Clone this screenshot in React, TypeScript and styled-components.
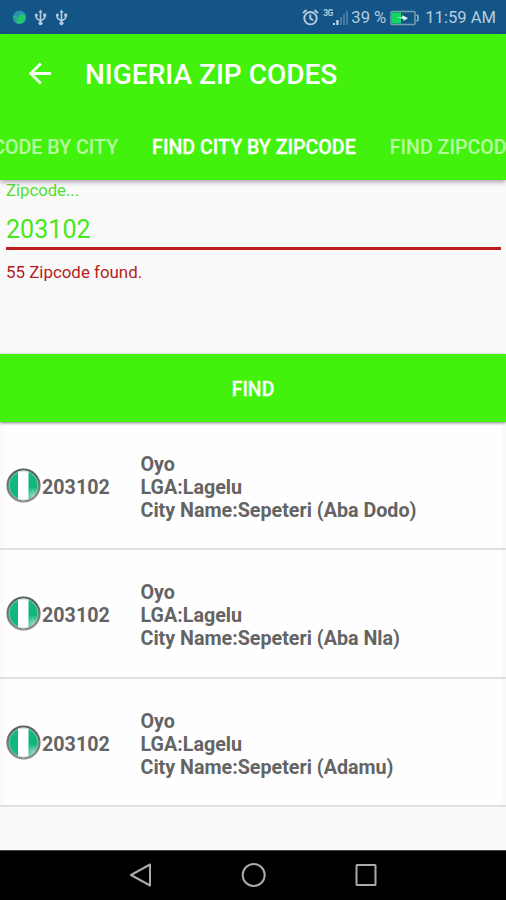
import React from "react";
import styled, { createGlobalStyle } from "styled-components";

const GlobalStyle = createGlobalStyle`
  * { box-sizing: border-box; }
  body { margin: 0; background: #fafafa; font-family: Roboto, sans-serif; }
`;

const Screen = styled.div`
  width: 506px;
  height: 900px;
  display: flex;
  flex-direction: column;
  overflow: hidden;
  background: #fafafa;
`;

const StatusBar = styled.div`
  height: 34px;
  flex: none;
  display: flex;
  align-items: center;
  justify-content: space-between;
  padding: 1px 10px 0 12px;
  background: #145588;
  color: #b5cbdc;
`;

const StatusGroup = styled.div`
  display: flex;
  align-items: center;
`;

const StatusText = styled.span`
  font-size: 16.6px;
  line-height: 34px;
  white-space: nowrap;
`;

const Icon = styled.svg<{ $gap?: number }>`
  display: block;
  flex: none;
  margin-right: ${(p) => p.$gap ?? 0}px;
`;

const Header = styled.header`
  height: 146px;
  flex: none;
  position: relative;
  background: #43f20c;
  color: #fff;
  box-shadow: 0 2px 5px rgba(60, 30, 60, 0.42);
`;

const Toolbar = styled.div`
  height: 80px;
  display: flex;
  align-items: center;
  padding-left: 28px;
`;

const Title = styled.h1`
  margin: 1px 0 0 33px;
  font-size: 28px;
  font-weight: 500;
  line-height: 32px;
  white-space: nowrap;
`;

const Tabs = styled.nav`
  height: 66px;
  display: flex;
  align-items: center;
  justify-content: center;
  gap: 34px;
  padding: 2px 4px 0 0;
  overflow: hidden;
`;

const Tab = styled.span<{ $active?: boolean }>`
  flex: none;
  font-size: 19.6px;
  font-weight: 500;
  line-height: 24px;
  white-space: nowrap;
  color: ${(p) => (p.$active ? "#fff" : "#b4fa9e")};
  -webkit-text-stroke: ${(p) => (p.$active ? "0.3px" : "0.15px")} currentColor;
`;

const Form = styled.section`
  height: 174px;
  flex: none;
  padding: 0 5px 0 6px;
  display: flex;
  flex-direction: column;
`;

const Label = styled.label`
  padding-top: 1px;
  font-size: 16.7px;
  line-height: 20px;
  color: #51e02b;
`;

const Value = styled.div`
  margin-top: 11px;
  height: 35px;
  font-size: 25.1px;
  line-height: 35px;
  color: #47e81b;
`;

const Underline = styled.div`
  height: 3px;
  background: #bb1c1c;
`;

const Message = styled.div`
  margin-top: 12px;
  font-size: 16.9px;
  line-height: 21px;
  color: #b51c22;
`;

const FindButton = styled.button`
  width: 100%;
  height: 68px;
  flex: none;
  border: 0;
  padding: 3px 0 0;
  background: #43f20c;
  color: #f8fff5;
  font: 500 19.4px Roboto, sans-serif;
  -webkit-text-stroke: 0.3px currentColor;
  position: relative;
  box-shadow: 0 1px 3px rgba(0, 0, 0, 0.5);
`;

const List = styled.ul`
  margin: 0;
  padding: 0;
  list-style: none;
  height: 385px;
  flex: none;
  display: grid;
  grid-template-rows: 128px 129px 128px;
`;

const Row = styled.li`
  display: flex;
  align-items: center;
  padding: 0 0 0 6px;
  background: linear-gradient(#fefefe, #fefefe) 4px 0 / 498px 100% no-repeat;
  border-bottom: 2px solid #e0e0e0;
  color: #646464;
  font-size: 19.7px;
  font-weight: 700;
`;

const Code = styled.span`
  width: 99.5px;
  margin-top: 4px;
  padding-left: 1px;
  line-height: 23px;
`;

const Details = styled.div`
  padding-top: 4px;
  line-height: 23px;
  white-space: nowrap;
`;

const Spacer = styled.div`
  flex: 1;
`;

const NavBar = styled.footer`
  height: 50px;
  flex: none;
  display: flex;
  align-items: center;
  justify-content: center;
  gap: 88px;
  padding: 0 0 1px 2px;
  border-top: 1px solid #444;
  background: #000;
`;

const Usb = () => (
  <Icon width="13" height="17" viewBox="0 0 13 17" $gap={8} fill="none" stroke="#b3cbdc" strokeWidth="1.6">
    <path d="M6.5 2v12M2.3 6v2.3q0 2 4.2 3.3M10.7 5.5v2.8q0 2-4.2 3.3" />
    <path d="M6.5.4 8.6 3.6H4.4z" fill="#b3cbdc" stroke="none" />
    <circle cx="2.3" cy="6" r="1.5" fill="#b3cbdc" stroke="none" />
    <rect x="9.2" y="4.6" width="3" height="3" fill="#b3cbdc" stroke="none" />
    <circle cx="6.5" cy="14.2" r="2" fill="#b3cbdc" stroke="none" />
  </Icon>
);

const Globe = () => (
  <Icon width="15" height="15" viewBox="0 0 15 15" $gap={7}>
    <circle cx="7.5" cy="7.5" r="6.8" fill="#2795ae" />
    <path d="M1 6q2-1 3 1l2 1 3-4 4 1q1 4-2 7-4 3-7 0l2-3-3-1z" fill="#25c967" />
  </Icon>
);

const Alarm = () => (
  <Icon width="17" height="17" viewBox="0 0 17 17" $gap={4} fill="none" stroke="#b5cbdc" strokeWidth="1.9">
    <circle cx="8.5" cy="9.2" r="6.2" />
    <path d="M1 4 4.5 1M16 4 12.5 1M8.3 5.5v4l2.8 1.8" />
  </Icon>
);

const Net = styled.span`
  align-self: flex-start;
  margin-top: -1px;
  width: 10px;
  font-size: 8.5px;
  line-height: 9px;
  font-weight: 700;
  letter-spacing: -0.8px;
`;

const NetGroup = styled.div`
  display: flex;
  height: 16px;
  margin-right: 3px;
`;

const Signal = () => (
  <Icon width="15" height="16" viewBox="0 0 15 16">
    <path d="M0 15v-2h2v2zM3.3 15v-5h2.2v5z" fill="#c7d9e5" />
    <path d="M7 15V7h2v8zM10 15V4h2v11zM13 15V1h2v14z" fill="#457b9f" />
  </Icon>
);

const Battery = () => (
  <Icon width="29" height="16" viewBox="0 0 29 16" $gap={6}>
    <rect x="1" y="1.5" width="24" height="13" rx="1" fill="none" stroke="#779eae" strokeWidth="1.5" />
    <path d="M26.5 5q1.5 0 1.5 1.5v3Q28 11 26.5 11" fill="none" stroke="#9db9cb" strokeWidth="1.5" />
    <rect x="2" y="2.5" width="9" height="11" fill="#13d765" />
    <path d="M7 7.3h5V5.2l6 2.7-4.5 3V9z" fill="#d9fff0" />
  </Icon>
);

const Flag = ({ id }: { id: string }) => (
  <Icon width="35" height="35" viewBox="0 0 35 35">
    <defs>
      <clipPath id={`disc-${id}`}>
        <circle cx="17.5" cy="17.5" r="15.7" />
      </clipPath>
      <radialGradient id={`shine-${id}`} cx=".78" cy=".78" r=".25">
        <stop offset="0" stopColor="#fff" stopOpacity=".55" />
        <stop offset="1" stopColor="#fff" stopOpacity="0" />
      </radialGradient>
      <linearGradient id={`rim-${id}`} x1="0" y1="0" x2="0" y2="1">
        <stop offset="0" stopColor="#5c605e" />
        <stop offset="1" stopColor="#8c8c8c" />
      </linearGradient>
    </defs>
    <g clipPath={`url(#disc-${id})`}>
      <path d="M0 0h35v36H0z" fill="#12b77b" />
      <path d="M12 0h10.5v36H12z" fill="#fff" />
      <path d="M0 0h35v36H0z" fill={`url(#shine-${id})`} />
    </g>
    <circle cx="17.5" cy="17.5" r="16" fill="none" stroke={`url(#rim-${id})`} strokeWidth="2.2" />
    <circle cx="17.5" cy="17.5" r="14.4" fill="none" stroke="#b9cec4" strokeOpacity=".65" />
  </Icon>
);

const rows = [
  { id: "dodo", code: "203102", state: "Oyo", lga: "Lagelu", city: "Sepeteri (Aba Dodo)" },
  { id: "nla", code: "203102", state: "Oyo", lga: "Lagelu", city: "Sepeteri (Aba Nla)" },
  { id: "adamu", code: "203102", state: "Oyo", lga: "Lagelu", city: "Sepeteri (Adamu)" },
];

export default function App() {
  return (
    <Screen>
      <GlobalStyle />
      <StatusBar>
        <StatusGroup>
          <Globe />
          <Usb />
          <Usb />
        </StatusGroup>
        <StatusGroup>
          <Alarm />
          <NetGroup>
            <Net>3G</Net>
            <Signal />
          </NetGroup>
          <StatusText>39 %</StatusText>
          <Icon width="4" height="1" />
          <Battery />
          <StatusText>11:59 AM</StatusText>
        </StatusGroup>
      </StatusBar>
      <Header>
        <Toolbar>
          <Icon width="24" height="24" viewBox="0 0 24 24" fill="none" stroke="#f6fff2" strokeWidth="2.8">
            <path d="M23 11.5H3M12.8 1.4 2.7 11.5l10.1 10.1" />
          </Icon>
          <Title>NIGERIA ZIP CODES</Title>
        </Toolbar>
        <Tabs>
          <Tab>FIND ZIPCODE BY CITY</Tab>
          <Tab $active>FIND CITY BY ZIPCODE</Tab>
          <Tab>FIND ZIPCODE BY LGA</Tab>
        </Tabs>
      </Header>
      <Form>
        <Label>Zipcode...</Label>
        <Value>203102</Value>
        <Underline />
        <Message>55 Zipcode found.</Message>
      </Form>
      <FindButton>FIND</FindButton>
      <List>
        {rows.map((r) => (
          <Row key={r.id}>
            <Flag id={r.id} />
            <Code>{r.code}</Code>
            <Details>
              <div>{r.state}</div>
              <div>LGA:{r.lga}</div>
              <div>City Name:{r.city}</div>
            </Details>
          </Row>
        ))}
      </List>
      <Spacer />
      <NavBar>
        <Icon width="24" height="24" viewBox="0 0 24 24" fill="none" stroke="#aaa" strokeWidth="2" strokeLinejoin="round">
          <path d="M21 1.5v21L2 12z" />
        </Icon>
        <Icon width="26" height="26" viewBox="0 0 26 26" fill="none" stroke="#aaa" strokeWidth="2">
          <circle cx="12.7" cy="13" r="11" />
        </Icon>
        <Icon width="24" height="24" viewBox="0 0 24 24" fill="none" stroke="#aaa" strokeWidth="2">
          <rect x="1.5" y="2" width="19" height="20" rx=".5" />
        </Icon>
      </NavBar>
    </Screen>
  );
}
